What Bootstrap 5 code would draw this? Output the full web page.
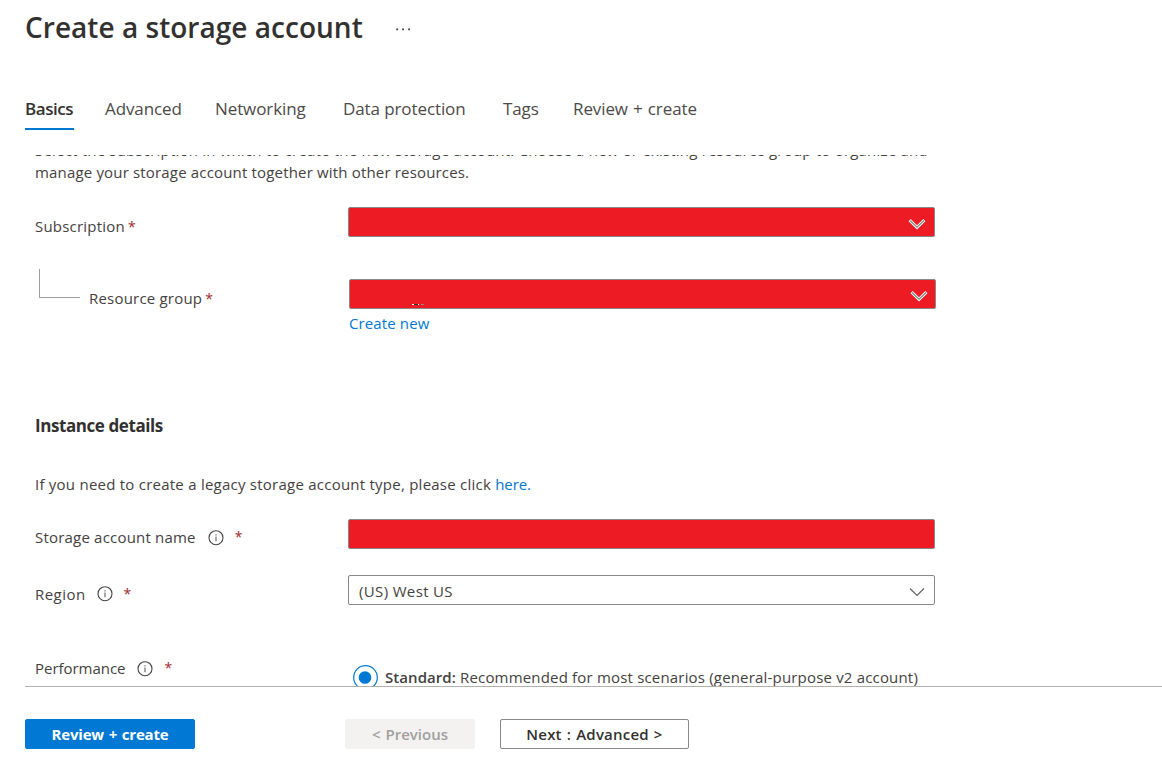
<!DOCTYPE html>
<html lang="en">
<head>
<meta charset="utf-8">
<meta name="viewport" content="width=device-width, initial-scale=1">
<title>Create a storage account</title>
<link href="https://cdn.jsdelivr.net/npm/bootstrap@5.3.0/dist/css/bootstrap.min.css" rel="stylesheet">
<style>
  body{font-family:"Open Sans","Noto Sans",sans-serif;font-size:15px;line-height:22px;letter-spacing:.2px;color:#444240;background:#fff}
  .page{height:773px;padding-left:25px}
  .page-title{font-size:28px;line-height:38px;font-weight:600;letter-spacing:.03px;color:#323130;padding-top:8px}
  .more{margin:20px 0 0 33px}
  .head-bar{height:92px}
  .tab-bar .nav-link{padding:4px 0 0;color:#4c4a48;font-size:17px;line-height:26px;height:38px;letter-spacing:-.1px;white-space:nowrap}
  .tab-bar .nav-link.active{font-weight:600;color:#323130;border-bottom:2px solid #0078d4;letter-spacing:-.45px;width:49px}
  .form-pane{margin-top:25px;height:532px;border-bottom:1px solid #b3b0ad}
  .form-body{padding-left:10px;margin-top:-16px}
  .field-label{width:313px}
  .field-row{white-space:nowrap}
  .req{color:#a4262c;font-size:14px;line-height:22px}
  .field-label:not(.d-flex) .req,.branch + div .req{margin-left:-1px}
  .box{width:587px;height:30px;border:1px solid #8a8886;border-radius:2px;padding:0 9px 0 10px}
  .box .chev{margin-top:3px}
  .redacted{background:#ed1c24}
  .az-link{color:#0078d4;text-decoration:none}
  .branch{width:41px;height:29px;border-left:1px solid #a19f9d;border-bottom:1px solid #a19f9d;margin:-18px 9px 0 4px}
  .section-title{font-size:17px;line-height:22px;font-weight:700;letter-spacing:-.42px;color:#323130;padding-top:1px}
  .radio-dot{width:25px;height:25px}
  .remnant{margin:20px auto 0 52px}
  .btn{--bs-btn-padding-y:0;--bs-btn-padding-x:0;--bs-btn-font-size:15px;--bs-btn-line-height:28px;--bs-btn-border-radius:2px;--bs-btn-font-weight:600;height:30px}
  .btn-go{--bs-btn-bg:#0078d4;--bs-btn-color:#fff;--bs-btn-border-color:#0078d4;--bs-btn-font-weight:700;width:170px;letter-spacing:-.2px;word-spacing:1px}
  .btn-prev{--bs-btn-disabled-bg:#f3f2f1;--bs-btn-disabled-color:#a19f9d;--bs-btn-disabled-border-color:#f3f2f1;--bs-btn-disabled-opacity:1;width:130px;margin-left:150px;word-spacing:1px}
  .btn-next{--bs-btn-bg:#fff;--bs-btn-color:#323130;--bs-btn-border-color:#8a8886;width:189px;margin-left:25px;letter-spacing:.2px;word-spacing:1px}
</style>
</head>
<body>
<svg width="0" height="0" class="position-absolute" aria-hidden="true">
  <symbol id="info" viewBox="0 0 16 16"><circle cx="8" cy="7.7" r="7" fill="none" stroke="#484644" stroke-width="1.1"/><path d="M8 6.6V11.2M8 4.3V5.5" stroke="#605e5c" stroke-width="1.1"/></symbol>
  <symbol id="chev" viewBox="0 0 18 12"><path d="M2 2.5L9 9.5L16 2.5" fill="none" stroke="#605e5c" stroke-width="1.1"/></symbol>
  <symbol id="chev-red" viewBox="0 0 18 12"><path d="M1.6 2.2L9 9.3L16.4 2.2" fill="none" stroke="#fff" stroke-width="3"/><path d="M2 2.5L9 9.2L16 2.5" fill="none" stroke="#8a8886" stroke-width="1.3"/></symbol>
</svg>
<div class="page overflow-hidden">
  <header class="head-bar d-flex">
    <h1 class="page-title mb-0">Create a storage account</h1>
    <svg class="more" width="16" height="16" viewBox="0 0 16 16" fill="#323130"><rect y="8.5" x="0.3" width="1.7" height="1.7"/><rect y="8.5" x="6.2" width="1.7" height="1.7"/><rect y="8.5" x="12.2" width="1.7" height="1.7"/></svg>
  </header>
  <nav class="nav tab-bar flex-nowrap">
    <a class="nav-link active" href="#">Basics</a>
    <a class="nav-link" href="#" style="margin-left:31px;width:110px">Advanced</a>
    <a class="nav-link" href="#" style="width:128px">Networking</a>
    <a class="nav-link" href="#" style="width:160px">Data protection</a>
    <a class="nav-link" href="#" style="width:70px">Tags</a>
    <a class="nav-link" href="#" style="word-spacing:.8px">Review + create</a>
  </nav>
  <main class="form-pane overflow-hidden">
    <div class="form-body">
      <p class="mb-0 text-nowrap">Select the subscription in which to create the new storage account. Choose a new or existing resource group to organize and<br><span style="letter-spacing:.17px">manage your storage account together with other resources.</span></p>

      <div class="field-row d-flex" style="padding-top:24px;height:96px">
        <div class="field-label pt-2">Subscription <span class="req">*</span></div>
        <div class="box redacted d-flex align-items-center justify-content-end" style="padding-right:8px"><svg class="chev" width="18" height="12"><use href="#chev-red"/></svg></div>
      </div>

      <div class="field-row d-flex" style="height:135px">
        <div class="field-label d-flex pt-2" style="width:314px"><div class="branch"></div><div>Resource group <span class="req">*</span></div></div>
        <div>
          <div class="box redacted d-flex align-items-center" style="padding-right:7px"><svg class="remnant" width="14" height="3"><path d="M9 1.5h3" stroke="#8a8886"/><path d="M0 1.5h7" stroke="#fff"/><path d="M2 1.5h4" stroke="#323130"/></svg><svg class="chev" width="18" height="12"><use href="#chev-red"/></svg></div>
          <a class="az-link d-block" href="#" style="margin-top:3px;letter-spacing:.12px">Create new</a>
        </div>
      </div>

      <h2 class="section-title mb-0">Instance details</h2>
      <p class="mb-0 text-nowrap" style="padding-top:36px;height:82px;letter-spacing:.24px">If you need to create a legacy storage account type, please click <a class="az-link" href="#" style="letter-spacing:-.1px">here.</a></p>

      <div class="field-row d-flex" style="height:56px">
        <div class="field-label d-flex" style="padding-top:7px">Storage account name<svg width="16" height="16" style="margin:4px 0 0 12px"><use href="#info"/></svg><span class="req" style="margin-left:11px">*</span></div>
        <div class="box redacted"></div>
      </div>

      <div class="field-row d-flex" style="height:80px">
        <div class="field-label d-flex" style="padding-top:8px"><span style="letter-spacing:.45px">Region</span><svg width="16" height="16" style="margin:3px 0 0 11px"><use href="#info"/></svg><span class="req" style="margin-left:11px">*</span></div>
        <div class="box d-flex align-items-center justify-content-between" style="padding-right:8px"><span style="letter-spacing:.35px;padding-top:2px">(US) West US</span><svg class="chev" width="18" height="12"><use href="#chev"/></svg></div>
      </div>

      <div class="field-row d-flex">
        <div class="field-label d-flex" style="padding-top:2px"><span style="letter-spacing:-.03px">Performance</span><svg width="16" height="16" style="margin:4px 0 0 12px"><use href="#info"/></svg><span class="req" style="margin-left:11px">*</span></div>
        <div class="d-flex" style="padding:10px 0 0 5px">
          <svg class="radio-dot" viewBox="0 0 25 25"><circle cx="12.5" cy="12.5" r="11.8" fill="none" stroke="#0078d4" stroke-width="1.2"/><circle cx="12" cy="12.5" r="6.3" fill="#0078d4"/></svg>
          <div style="margin:1px 0 0 7px;letter-spacing:.18px"><span class="fw-semibold" style="letter-spacing:.06px">Standard:</span> Recommended for most scenarios (general-purpose v2 account)</div>
        </div>
      </div>
    </div>
  </main>
  <footer class="d-flex" style="padding-top:32px">
    <button class="btn btn-go" type="button">Review + create</button>
    <button class="btn btn-prev" type="button" disabled>&lt; Previous</button>
    <button class="btn btn-next" type="button">Next : Advanced &gt;</button>
  </footer>
</div>
<script src="https://cdn.jsdelivr.net/npm/bootstrap@5.3.0/dist/js/bootstrap.bundle.min.js"></script>
</body>
</html>
